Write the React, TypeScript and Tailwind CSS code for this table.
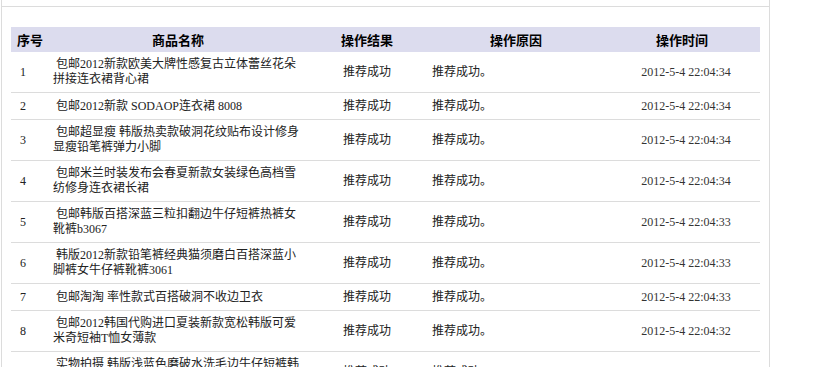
const rows = [
  { id: 1, name: "包邮2012新款欧美大牌性感复古立体蕾丝花朵拼接连衣裙背心裙", time: "2012-5-4 22:04:34" },
  { id: 2, name: "包邮2012新款 SODAOP连衣裙 8008", time: "2012-5-4 22:04:34" },
  { id: 3, name: "包邮超显瘦 韩版热卖款破洞花纹贴布设计修身显瘦铅笔裤弹力小脚", time: "2012-5-4 22:04:34" },
  { id: 4, name: "包邮米兰时装发布会春夏新款女装绿色高档雪纺修身连衣裙长裙", time: "2012-5-4 22:04:34" },
  { id: 5, name: "包邮韩版百搭深蓝三粒扣翻边牛仔短裤热裤女靴裤b3067", time: "2012-5-4 22:04:33" },
  { id: 6, name: "韩版2012新款铅笔裤经典猫须磨白百搭深蓝小脚裤女牛仔裤靴裤3061", time: "2012-5-4 22:04:33" },
  { id: 7, name: "包邮淘淘 率性款式百搭破洞不收边卫衣", time: "2012-5-4 22:04:33" },
  { id: 8, name: "包邮2012韩国代购进口夏装新款宽松韩版可爱米奇短袖T恤女薄款", time: "2012-5-4 22:04:32" },
  { id: 9, name: "实物拍摄 韩版浅蓝色磨破水洗毛边牛仔短裤韩版女热裤", time: "2012-5-4 22:04:32" },
];

const font = "font-['Liberation_Serif','Noto_Sans_CJK_SC',serif]";

export default function App() {
  return (
    <div className="ml-[1px] min-h-screen w-[769px] border-x border-[#dcdcdc] bg-white">
      <div className="h-[7px] border-b border-[#dcdcdc]" />
      <div className="pl-[9px] pt-[20px]">
        <table className={`w-[749px] table-fixed border-collapse text-[12px] text-[#222] ${font}`}>
          <colgroup>
            <col className="w-[39px]" />
            <col className="w-[256px]" />
            <col className="w-[122px]" />
            <col className="w-[176px]" />
            <col className="w-[156px]" />
          </colgroup>
          <thead>
            <tr className="h-[25px] bg-[#dcdcee] font-['Noto_Sans_CJK_SC',sans-serif] text-[13px] font-bold leading-[15px] text-black">
              <th className="pl-[6px] text-left">序号</th>
              <th className="text-center">商品名称</th>
              <th className="text-center">操作结果</th>
              <th className="text-center">操作原因</th>
              <th className="text-center">操作时间</th>
            </tr>
          </thead>
          <tbody>
            {rows.map((r) => (
              <tr key={r.id} className="border-b border-[#dcdcdc] leading-[15px]">
                <td className="h-[27px] py-[5px] pl-[9px] align-middle">{r.id}</td>
                <td className="px-[3px] py-[5px] align-middle">{"\u00a0" + r.name}</td>
                <td className="py-[5px] text-center align-middle">推荐成功</td>
                <td className="py-[5px] pl-[4px] align-middle">推荐成功。</td>
                <td className="py-[5px] pl-[8px] text-center align-middle text-[#333]">{r.time}</td>
              </tr>
            ))}
          </tbody>
        </table>
      </div>
    </div>
  );
}
